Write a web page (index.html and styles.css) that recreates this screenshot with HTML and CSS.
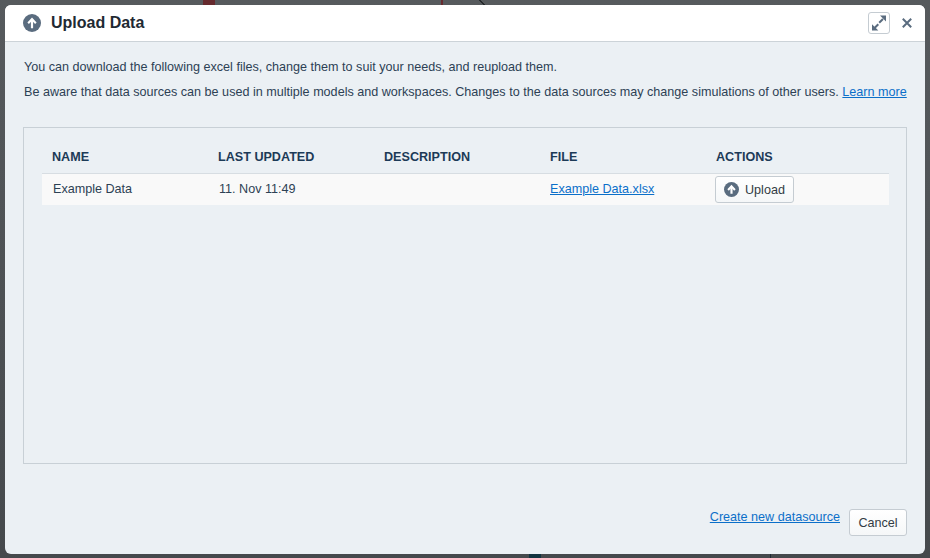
FILE: index.html
```html
<!DOCTYPE html>
<html lang="en">
<head>
<meta charset="utf-8">
<title>Upload Data</title>
<link rel="stylesheet" href="styles.css">
</head>
<body>
<div class="scrap scrap-red"></div>
<div class="scrap scrap-curve"></div>
<div class="scrap scrap-line"></div>
<div class="scrap scrap-teal"></div>
<div class="scrap scrap-thin"></div>
<div class="dialog">
  <header class="head">
    <svg class="icon-up big" viewBox="0 0 18 18"><circle cx="9" cy="9" r="9" fill="#5a6c7f"/><path d="M9 14.2V6" fill="none" stroke="#fff" stroke-width="2.2"/><path d="M9 3.6 13.6 8.6 12.1 10 9 6.8 5.9 10 4.4 8.6Z" fill="#fff"/></svg>
    <h1 class="title">Upload Data</h1>
    <button class="expand" aria-label="Expand"><svg viewBox="0 0 16 16" width="16" height="16"><path d="M9 .5h6v6Z" fill="#5a6c7f"/><path d="M12 4 8.2 7.8" stroke="#5a6c7f" stroke-width="2" fill="none"/><path d="M1 9.2v6.3h6.3Z" fill="#5a6c7f"/><path d="M3.5 13 7.3 9.2" stroke="#5a6c7f" stroke-width="2" fill="none"/></svg></button>
    <button class="close" aria-label="Close"><svg viewBox="0 0 10 10" width="10" height="10"><path d="M.8.8l8.4 8.4M9.2.8.8 9.2" stroke="#5a6c7f" stroke-width="2"/></svg></button>
  </header>
  <main class="body">
    <p class="line first">You can download the following excel files, change them to suit your needs, and reupload them.</p>
    <p class="line">Be aware that data sources can be used in multiple models and workspaces. Changes to the data sources may change simulations of other users. <a href="#">Learn more</a></p>
    <section class="panel">
      <div class="row heads"><span>NAME</span><span>LAST UPDATED</span><span>DESCRIPTION</span><span>FILE</span><span>ACTIONS</span></div>
      <div class="row data">
        <span class="in">Example Data</span><span class="in">11. Nov 11:49</span><span></span><span><a href="#">Example Data.xlsx</a></span>
        <span class="action"><button class="btn upload"><svg class="icon-up" viewBox="0 0 18 18"><circle cx="9" cy="9" r="9" fill="#5a6c7f"/><path d="M9 14.2V6" fill="none" stroke="#fff" stroke-width="2.6"/><path d="M9 3.4 14 8.8 12.2 10.4 9 7 5.8 10.4 4 8.8Z" fill="#fff"/></svg>Upload</button></span>
      </div>
    </section>
    <footer class="foot">
      <a href="#" class="create">Create new datasource</a>
      <button class="btn cancel">Cancel</button>
    </footer>
  </main>
</div>
</body>
</html>
```
FILE: styles.css
```css
* { box-sizing: border-box; }
html, body { margin: 0; height: 100%; }
body {
  background: linear-gradient(#565a5d, #45494c);
  padding: 5px;
  font: 12.6px/16px "Liberation Sans", Arial, sans-serif;
  color: #2d4154;
  overflow: hidden;
  position: relative;
}
.scrap { position: absolute; }
.scrap-red { left: 203px; top: 0; width: 12px; height: 5px; background: #662a2e; }
.scrap-curve { left: 441px; top: 0; width: 2px; height: 5px; background: #662a2e; }
.scrap-line { left: 478px; top: 0; width: 8px; height: 5px; background: linear-gradient(45deg, transparent 45%, #25292c 45%, #25292c 60%, transparent 60%); }
.scrap-teal { left: 529px; top: 554px; width: 12px; height: 4px; background: #12333f; }
.scrap-thin { left: 770px; top: 554px; width: 1px; height: 4px; background: #1f2a33; }
.dialog {
  position: relative;
  width: 920px;
  height: 549px;
  background: #ebf0f4;
  border-radius: 6px;
  display: flex;
  flex-direction: column;
  overflow: hidden;
}
.head {
  height: 37px;
  flex: none;
  background: #fff;
  border-bottom: 1px solid #ccd3d8;
  display: flex;
  align-items: center;
  padding: 0 12px 0 18px;
}
.icon-up { width: 15px; height: 15px; flex: none; }
.icon-up.big { width: 18px; height: 18px; }
.title { margin: 0 0 0 10px; font-size: 16px; line-height: 20px; font-weight: 700; color: #1f2a33; flex: 1; }
.expand {
  width: 22px; height: 22px; padding: 0; margin-right: 11px;
  background: #fff; border: 1px solid #c5ccd2; border-radius: 3px;
  display: flex; align-items: center; justify-content: center;
}
.close { width: 12px; height: 12px; padding: 0; border: 0; background: none; display: flex; align-items: center; justify-content: center; }
.body { flex: 1; padding: 0 18px; display: flex; flex-direction: column; }
.line { margin: 0; height: 16px; margin-top: 9px; padding-left: 1px; white-space: nowrap; }
.line.first { margin-top: 17px; }
a { color: #0b6fc9; text-decoration: underline; }
.panel {
  margin-top: 27px;
  height: 337px;
  border: 1px solid #c8d0d6;
  padding: 18px 17px 0 18px;
}
.row { display: grid; }
.heads {
  height: 28px;
  align-items: start;
  padding: 3px 0 0 10px;
  grid-template-columns: repeat(4, 166px) 1fr;
  font-weight: 700;
  color: #1c3a57;
  border-bottom: 1px solid #d7dde2;
}
.data {
  height: 31px;
  background: #f9f9f9;
  align-items: center;
  padding: 0 0 2px 11px;
  grid-template-columns: 166px 165px 166px 165px 1fr;
}
.action { display: flex; padding-top: 2px; }
.btn {
  font: inherit;
  color: #333c44;
  background: linear-gradient(#fff, #f5f7f8);
  border: 1px solid #c5ccd2;
  border-radius: 3px;
  display: inline-flex;
  align-items: center;
}
.upload { height: 27px; width: 79px; padding: 0 0 0 8px; gap: 6px; }
.foot { margin-top: 45px; display: flex; justify-content: flex-end; align-items: flex-start; }
.cancel { height: 27px; width: 58px; justify-content: center; padding: 0; margin-left: 9px; }
```
